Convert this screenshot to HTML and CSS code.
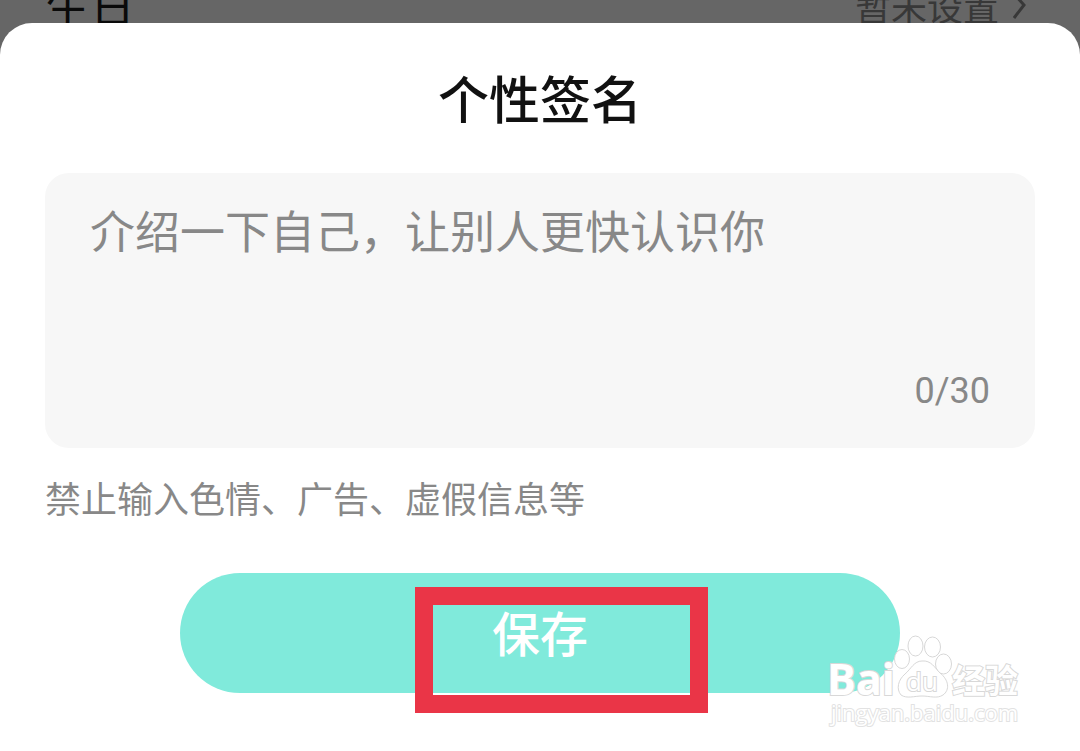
FILE: index.html
```html
<!DOCTYPE html>
<html lang="zh-CN">
<head>
  <meta charset="utf-8">
  <title>个性签名</title>
  <meta name="viewport" content="width=device-width, initial-scale=1">
  <link rel="stylesheet" href="styles.css">
</head>
<body>
  <div class="profile-row">
    <span>生日</span>
    <span class="row-value">
      暂未设置
      <svg class="arrow" viewBox="0 0 16 28" width="16" height="28">
        <path d="M2 0 L11 10 L1 23" />
      </svg>
    </span>
  </div>

  <form class="sheet">
    <h1><label for="signature">个性签名</label></h1>
    <div class="input-box">
      <textarea id="signature" maxlength="30" placeholder="介绍一下自己，让别人更快认识你"></textarea>
      <span class="counter">0/30</span>
    </div>
    <p class="hint">禁止输入色情、广告、虚假信息等</p>
    <div class="actions">
      <button class="save" type="button">保存</button>
      <div class="highlight"></div>
    </div>

    <svg class="watermark" viewBox="0 0 210 100" width="210" height="100">
      <g class="paw">
        <ellipse cx="77" cy="29" rx="7.5" ry="9.5" />
        <ellipse cx="90.5" cy="16" rx="7.5" ry="10" />
        <ellipse cx="107.5" cy="17" rx="8" ry="10" />
        <ellipse cx="118.5" cy="34" rx="8" ry="10" />
        <path d="M97 31 C106 30 110 38 115 43 C124 50 125 60 118 65 C112 69 105 66 97 66 C89 66 82 69 76 65 C71 59 73 50 80 44 C86 39 89 31 97 31 Z" />
      </g>
      <text class="logo" x="2" y="65">Bai</text>
      <text class="logo-du" x="81" y="61">du</text>
      <text class="logo-cn" x="127" y="63">经验</text>
      <text class="logo-url" x="6" y="91">jingyan.baidu.com</text>
    </svg>
  </form>
</body>
</html>
```
FILE: styles.css
```css
* {
  box-sizing: border-box;
}

body {
  margin: 0;
  background: #666;
  font-family: Roboto, "Noto Sans CJK SC", sans-serif;
}

.profile-row {
  display: flex;
  justify-content: space-between;
  align-items: flex-end;
  height: 23px;
  padding: 0 51px 0 45px;
  overflow: hidden;
  color: #0a0a0a;
  font-size: 45px;
  line-height: 28px;
}

.row-value {
  display: flex;
  gap: 14px;
  color: #383838;
  font-size: 36px;
}

.arrow {
  fill: none;
  stroke: #383838;
  stroke-width: 3;
}

.sheet {
  position: relative;
  min-height: calc(100vh - 23px);
  padding: 49px 45px 36px;
  background: #fff;
  border-radius: 32px 32px 0 0;
}

h1 {
  margin: 0 0 41px;
  color: #111;
  font-size: 51px;
  font-weight: 500;
  line-height: 60px;
  text-align: center;
}

.input-box {
  display: flex;
  flex-direction: column;
  padding: 31px 45px 29px;
  background: #f7f7f7;
  border-radius: 24px;
}

textarea {
  height: 160px;
  padding: 0;
  border: none;
  outline: none;
  resize: none;
  background: transparent;
  color: #111;
  font-family: inherit;
  font-size: 45px;
  line-height: 60px;
}

textarea::placeholder {
  color: #888;
  opacity: 1;
}

.counter {
  align-self: flex-end;
  height: 55px;
  color: #888;
  font-size: 36px;
  line-height: 55px;
}

.hint {
  margin: 31px 0 49px;
  color: #888;
  font-size: 36px;
  line-height: 45px;
}

.actions {
  position: relative;
  max-width: 720px;
  margin: 0 auto;
}

.save {
  display: block;
  width: 100%;
  height: 120px;
  padding: 0 0 4px;
  border: none;
  border-radius: 60px;
  background: #80eadb;
  color: #fff;
  font-family: inherit;
  font-size: 48px;
  font-weight: 500;
  cursor: pointer;
}

/* red frame around the save label */
.highlight {
  position: absolute;
  top: 14px;
  left: 235px;
  width: 293px;
  height: 126px;
  border: 18px solid #ea3547;
  pointer-events: none;
}

.watermark {
  position: absolute;
  right: 45px;
  bottom: 21px;
  fill: #fff;
  stroke: #d8d8d8;
  stroke-width: 1;
  pointer-events: none;
}

.watermark text {
  stroke-width: 2;
  paint-order: stroke;
}

.logo {
  font-family: "Open Sans", sans-serif;
  font-size: 43px;
  font-weight: bold;
}

.watermark .logo-du {
  font-family: "Open Sans", sans-serif;
  font-size: 26px;
}

.logo-cn {
  font-family: "Noto Sans CJK SC", sans-serif;
  font-size: 33px;
  font-weight: bold;
}

.watermark .logo-url {
  font-family: "Open Sans", sans-serif;
  font-size: 22px;
  stroke: #e2e2e2;
}
```
